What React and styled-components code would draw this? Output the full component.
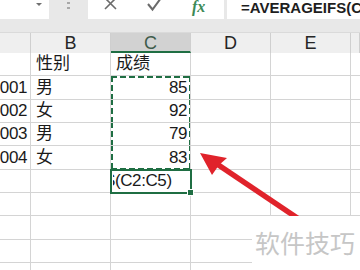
import React from "react";
import styled, { createGlobalStyle, css } from "styled-components";

const Global = createGlobalStyle`
  html, body { margin: 0; padding: 0; background: #fff; }
  body {
    width: 360px;
    height: 270px;
    overflow: hidden;
    font-family: "Liberation Sans", "Noto Sans CJK SC", sans-serif;
  }
`;

const GREEN = "#1f6e43";
const GRID = "#d4d4d4";

const Screen = styled.div`
  position: relative;
  width: 360px;
  height: 270px;
  overflow: hidden;
  background: #e8e8e8;
  display: flex;
  flex-direction: column;
`;

const FormulaBar = styled.div`
  display: flex;
  height: 19px;
  flex-shrink: 0;
`;

const NameBox = styled.div`
  width: 49px;
  background: #fff;
  display: flex;
  justify-content: flex-end;
  align-items: flex-start;
  padding: 3px 7px 0 0;
  box-sizing: border-box;
`;

const DropArrow = styled.span`
  width: 0;
  height: 0;
  border-left: 3px solid transparent;
  border-right: 3px solid transparent;
  border-top: 3px solid #707070;
`;

const Grip = styled.div`
  width: 39px;
  display: flex;
  flex-direction: column;
  align-items: center;
  gap: 3px;
  padding-top: 2px;
  box-sizing: border-box;
`;

const GripDot = styled.span`
  width: 3px;
  height: 2px;
  background: #a8a8a8;
`;

const ButtonBox = styled.div`
  width: 136px;
  background: #fff;
  display: flex;
  align-items: flex-start;
  padding-left: 16px;
  box-sizing: border-box;
  overflow: hidden;
`;

const IconSlot = styled.div`
  width: ${(p) => p.$w}px;
  display: flex;
  justify-content: flex-start;
`;

const Fx = styled.span`
  font-family: "Liberation Serif", serif;
  font-style: italic;
  font-weight: bold;
  font-size: 16px;
  line-height: 14px;
  color: #3d8a57;
`;

const FormulaInput = styled.div`
  flex: 1;
  margin-left: 3px;
  background: #fff;
  padding-left: 14px;
  font-weight: bold;
  font-size: 15px;
  line-height: 15px;
  color: #1e1e1e;
  white-space: nowrap;
  overflow: hidden;
`;

const Gap = styled.div`
  height: 13px;
  flex-shrink: 0;
`;

const Sheet = styled.div`
  display: flex;
  flex-direction: column;
  background: #fff;
  flex: 1;
`;

const HeaderRow = styled.div`
  display: flex;
  height: 21px;
  background: #efefef;
  border-top: 1px solid #dadada;
  box-sizing: border-box;
`;

const ColHead = styled.div`
  width: ${(p) => p.$w}px;
  flex-shrink: 0;
  box-sizing: border-box;
  border-right: 1px solid #cfcfcf;
  display: flex;
  justify-content: center;
  align-items: center;
  font-size: 18px;
  color: #262626;
  ${(p) =>
    p.$selected &&
    css`
      background: #d2d2d2;
      border-bottom: 2px solid ${GREEN};
      color: #3e5c4b;
      padding-top: 2px;
    `}
`;

const Row = styled.div`
  display: flex;
  height: 23.33px;
  flex-shrink: 0;
`;

const dashV = `linear-gradient(to bottom, ${GREEN} 6px, transparent 6px)`;
const dashH = `linear-gradient(to right, ${GREEN} 6px, transparent 6px)`;

const marqueeLayers = (m) => {
  const layers = [
    `${dashV} left top / 2px 9px repeat-y`,
    `${dashV} right top / 2px 9px repeat-y`,
  ];
  if (m === "top") layers.push(`${dashH} left top / 9px 2px repeat-x`);
  if (m === "bottom") layers.push(`${dashH} left bottom / 9px 2px repeat-x`);
  return layers.join(", ");
};

const Cell = styled.div`
  position: relative;
  width: ${(p) => p.$w}px;
  flex-shrink: 0;
  box-sizing: border-box;
  border-right: 1px solid ${GRID};
  border-bottom: 1px solid ${GRID};
  display: flex;
  align-items: flex-end;
  justify-content: ${(p) => (p.$num ? "flex-end" : "flex-start")};
  padding: 0 ${(p) => (p.$num ? 3 : 4)}px 1px ${(p) => (p.$num ? 0 : 5)}px;
  font-size: 17px;
  line-height: 20px;
  color: #1a1a1a;
  white-space: nowrap;
  overflow: ${(p) => (p.$active ? "visible" : "hidden")};
  letter-spacing: ${(p) => (p.$num ? "-0.4px" : "0")};
  ${(p) =>
    p.$marquee &&
    css`
      &::after {
        content: "";
        position: absolute;
        top: ${p.$marquee === "top" ? 0 : -1}px;
        left: 0;
        right: -1px;
        bottom: -1px;
        background: ${marqueeLayers(p.$marquee)};
        pointer-events: none;
      }
    `}
  ${(p) =>
    p.$active &&
    css`
      z-index: 2;
      &::after {
        content: "";
        position: absolute;
        top: -1px;
        left: -1px;
        right: -2px;
        bottom: -2px;
        border: 2px solid ${GREEN};
      }
      &::before {
        content: "";
        position: absolute;
        right: -4px;
        bottom: -4px;
        width: 5px;
        height: 5px;
        background: ${GREEN};
        border: 1px solid #fff;
        z-index: 3;
      }
    `}
`;

const EditText = styled.span`
  display: block;
  overflow: hidden;
  width: 100%;
  margin-left: -3px;
`;

const EditInner = styled.span`
  display: inline-block;
  margin-left: -9px;
  letter-spacing: -0.4px;
`;

const Arrow = styled.svg`
  position: absolute;
  left: 0;
  top: 0;
  pointer-events: none;
`;

const Watermark = styled.div`
  position: absolute;
  left: 252px;
  top: 216px;
  right: 0;
  bottom: 0;
  background: #fff;
  display: flex;
  align-items: center;
  padding: 0 0 2px 3px;
  font-family: "Noto Sans CJK SC", sans-serif;
  font-size: 25px;
  color: #c6c6c6;
`;

const COLS = [31, 80, 80, 80, 80, 9];

const data = [
  ["", "性别", "成绩"],
  ["001", "男", "85"],
  ["002", "女", "92"],
  ["003", "男", "79"],
  ["004", "女", "83"],
];

const marqueeFor = (r) => (r === 1 ? "top" : r === 4 ? "bottom" : r > 1 && r < 4 ? "mid" : null);

export default function App() {
  const emptyRows = [0, 1, 2, 3];
  return (
    <>
      <Global />
      <Screen>
        <FormulaBar>
          <NameBox>
            <DropArrow />
          </NameBox>
          <Grip>
            <GripDot />
            <GripDot />
          </Grip>
          <ButtonBox>
            <IconSlot $w={43}>
              <svg width="13" height="12" viewBox="0 0 13 12">
                <path d="M1 -2 L12 9 M12 -2 L1 9" stroke="#6b6b6b" strokeWidth="1.6" fill="none" />
              </svg>
            </IconSlot>
            <IconSlot $w={45}>
              <svg width="15" height="12" viewBox="0 0 15 12">
                <path d="M1 4 L5.5 9.5 L14 -2" stroke="#6b6b6b" strokeWidth="2" fill="none" />
              </svg>
            </IconSlot>
            <IconSlot $w={20}>
              <Fx>fx</Fx>
            </IconSlot>
          </ButtonBox>
          <FormulaInput>=AVERAGEIFS(C2:C5)</FormulaInput>
        </FormulaBar>
        <Gap />
        <Sheet>
          <HeaderRow>
            <ColHead $w={COLS[0]} />
            <ColHead $w={COLS[1]}>B</ColHead>
            <ColHead $w={COLS[2]} $selected>C</ColHead>
            <ColHead $w={COLS[3]}>D</ColHead>
            <ColHead $w={COLS[4]}>E</ColHead>
            <ColHead $w={COLS[5]} />
          </HeaderRow>
          {data.map((row, r) => (
            <Row key={r}>
              <Cell $w={COLS[0]} $num>{row[0]}</Cell>
              <Cell $w={COLS[1]}>{row[1]}</Cell>
              <Cell $w={COLS[2]} $num={r > 0} $marquee={marqueeFor(r)}>
                {row[2]}
              </Cell>
              <Cell $w={COLS[3]} />
              <Cell $w={COLS[4]} />
              <Cell $w={COLS[5]} />
            </Row>
          ))}
          <Row>
            <Cell $w={COLS[0]} />
            <Cell $w={COLS[1]} />
            <Cell $w={COLS[2]} $active>
              <EditText>
                <EditInner>S(C2:C5)</EditInner>
              </EditText>
            </Cell>
            <Cell $w={COLS[3]} />
            <Cell $w={COLS[4]} />
            <Cell $w={COLS[5]} />
          </Row>
          {emptyRows.map((i) => (
            <Row key={"e" + i}>
              {COLS.map((w, c) => (
                <Cell key={c} $w={w} />
              ))}
            </Row>
          ))}
        </Sheet>
        <Arrow width="360" height="270" viewBox="0 0 360 270">
          <line x1="214" y1="162" x2="330" y2="240" stroke="#e0232b" strokeWidth="5.5" />
          <polygon points="200,153 227,158 219,165 212,175" fill="#e0232b" />
        </Arrow>
        <Watermark>软件技巧</Watermark>
      </Screen>
    </>
  );
}
